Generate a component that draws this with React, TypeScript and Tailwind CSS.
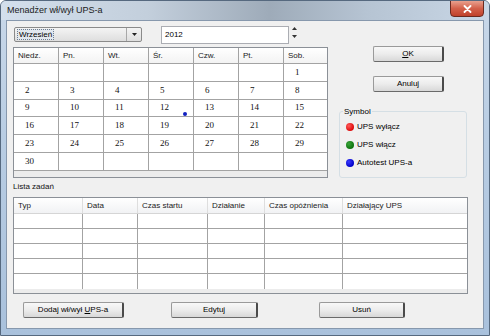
import React from 'react';

const sans = { fontFamily: '"Liberation Sans", Arial, sans-serif' };

const Btn = ({ children, className = '' }: { children: React.ReactNode; className?: string }) => (
  <div
    className={`flex items-center justify-center h-[16px] rounded-[2px] border border-[#9a9a9a] border-r-2 border-r-[#4a4a4a] border-b-[#6a6a6a] bg-gradient-to-b from-[#f8f8f8] via-[#ececec] to-[#d8d8d8] text-[8px] leading-none text-black ${className}`}
  >
    {children}
  </div>
);

const Dot = ({ color }: { color: string }) => (
  <span className={`inline-block w-[8px] h-[8px] rounded-full ${color}`} />
);

const weeks: (number | null)[][] = [
  [null, null, null, null, null, null, 1],
  [2, 3, 4, 5, 6, 7, 8],
  [9, 10, 11, 12, 13, 14, 15],
  [16, 17, 18, 19, 20, 21, 22],
  [23, 24, 25, 26, 27, 28, 29],
  [30, null, null, null, null, null, null],
];
const rowHeights = ['h-[18px]', 'h-[18px]', 'h-[17px]', 'h-[18px]', 'h-[18px]', 'h-[18px]'];
const days = ['Niedz.', 'Pn.', 'Wt.', 'Śr.', 'Czw.', 'Pt.', 'Sob.'];

const taskCols = ['Typ', 'Data', 'Czas startu', 'Działanie', 'Czas opóźnienia', 'Działający UPS'];
const taskGrid = 'grid grid-cols-[69px_55px_70px_57px_78px_1fr]';

export default function App() {
  return (
    <div
      style={sans}
      className="w-[490px] h-[336px] flex flex-col border border-[#56697f] rounded-t-[6px] bg-[linear-gradient(to_bottom,#c9d8e9,#b9cde3_40%,#a9c1dc)] overflow-hidden"
    >
      {/* pasek tytułu */}
      <div className="h-[19px] flex items-start justify-between bg-[linear-gradient(to_right,#d3dfec,#c3cfdc_30%,#9eabb9_55%,#b6c4d3_75%,#c9d7e6)]">
        <span className="pl-[6px] pt-[4px] text-[9px] leading-[10px] text-[#1b1b1b]">Menadżer wł/wył UPS-a</span>
        <div className="mr-[5px] w-[34px] h-[17px] -mt-px rounded-b-[4px] border border-[#6b2a20] bg-gradient-to-b from-[#e8a08e] via-[#d3604a] to-[#c0412b] flex items-center justify-center">
          <svg width="9" height="8" viewBox="0 0 9 8">
            <path d="M1.5 1 L7.5 7 M7.5 1 L1.5 7" stroke="#fff" strokeWidth="1.8" strokeLinecap="round" />
          </svg>
        </div>
      </div>

      {/* obszar klienta */}
      <div className="mx-[5px] mb-[6px] h-[309px] border border-[#8798ad] bg-[#f0f0f0] flex flex-col pl-[6px]">
        <div className="flex items-start">
          {/* lewa kolumna */}
          <div className="w-[315px] flex flex-col">
            <div className="h-[26px] flex items-start">
              <div className="mt-[6px] ml-[1px] w-[128px] h-[15px] flex rounded-[2px] border border-[#8a8a8a] bg-gradient-to-b from-[#f4f4f4] to-[#dedede]">
                <div className="flex-1 flex items-center pl-[2px]">
                  <span className="px-[1px] text-[8px] leading-[9px] border border-dotted border-[#6d7c8e] bg-[#e2e8ef]">Wrzesień</span>
                </div>
                <div className="w-[15px] border-l border-[#a8a8a8] flex items-center justify-center">
                  <svg width="5" height="3" viewBox="0 0 5 3">
                    <path d="M0 0 H5 L2.5 3 Z" fill="#222" />
                  </svg>
                </div>
              </div>
              <div className="mt-[5px] ml-[19px] w-[128px] h-[18px] border border-[#abadb3] bg-white flex items-center pl-[3px] text-[8px]">
                2012
              </div>
              <div className="mt-[6px] ml-[3px] flex flex-col items-center gap-[5px]">
                <svg width="5" height="3" viewBox="0 0 5 3">
                  <path d="M2.5 0 L5 3 H0 Z" fill="#333" />
                </svg>
                <svg width="5" height="3" viewBox="0 0 5 3">
                  <path d="M0 0 H5 L2.5 3 Z" fill="#333" />
                </svg>
              </div>
            </div>

            {/* kalendarz */}
            <div className="w-[315px] h-[131px] border border-[#8b9097] bg-[#ececec] flex flex-col">
              <div className="grid grid-cols-[45px_45px_45px_45px_45px_45px_1fr] h-[16px] border-b border-[#a3a3a3] bg-gradient-to-b from-white to-[#f3f3f3]">
                {days.map((d, i) => (
                  <div key={d} className={`flex items-center pl-[4px] text-[8px] text-[#222] ${i < 6 ? 'border-r border-[#a3a3a3]' : ''}`}>
                    {d}
                  </div>
                ))}
              </div>
              {weeks.map((w, r) => (
                <div key={r} className={`grid grid-cols-[45px_45px_45px_45px_45px_45px_1fr] ${rowHeights[r]} border-b border-[#a3a3a3] bg-white`}>
                  {w.map((n, i) => (
                    <div
                      key={i}
                      className={`relative flex items-center pl-[11px] text-[9px] text-[#111] ${i < 6 ? 'border-r border-[#a3a3a3]' : ''}`}
                      style={{ fontFamily: '"Liberation Serif", "Times New Roman", serif' }}
                    >
                      {n ?? ''}
                      {n === 12 && (
                        <span className="absolute left-[34px] top-[12px] w-[4px] h-[4px] rounded-full bg-[#1020c0]" />
                      )}
                    </div>
                  ))}
                </div>
              ))}
            </div>
          </div>

          {/* prawa kolumna */}
          <div className="ml-[11px] w-[128px] flex flex-col">
            <Btn className="mt-[25px] ml-[34px] w-[71px]">
              <span><u>O</u>K</span>
            </Btn>
            <Btn className="mt-[14px] ml-[34px] w-[71px]">Anuluj</Btn>
            <div className="relative mt-[19px] h-[67px] rounded-[3px] border border-[#d5dfe5] pt-[11px] pl-[6px] flex flex-col gap-[10px]">
              <span className="absolute -top-[5px] left-[3px] px-px bg-[#f0f0f0] text-[8px] leading-[9px]">Symbol</span>
              <div className="flex items-center gap-[3px] text-[8px] leading-[8px]">
                <Dot color="bg-[radial-gradient(circle_at_35%_35%,#ff5a5a,#dd0a0a_70%)]" />
                UPS wyłącz
              </div>
              <div className="flex items-center gap-[3px] text-[8px] leading-[8px]">
                <Dot color="bg-[radial-gradient(circle_at_35%_35%,#3aa43a,#0d730d_70%)]" />
                UPS włącz
              </div>
              <div className="flex items-center gap-[3px] text-[8px] leading-[8px]">
                <Dot color="bg-[radial-gradient(circle_at_35%_35%,#3b3bff,#0000c8_70%)]" />
                Autotest UPS-a
              </div>
            </div>
          </div>
        </div>

        <div className="h-[19px] pt-[4px] text-[8px] leading-[10px] text-[#111]">Lista zadań</div>

        {/* lista zadań */}
        <div className="w-[455px] h-[97px] border border-[#8b9097] bg-[#ececec] flex flex-col">
          <div className={`${taskGrid} h-[16px] border-b border-[#d5d5d5] bg-gradient-to-b from-white to-[#f1f2f4]`}>
            {taskCols.map((c, i) => (
              <div key={c} className={`flex items-center pl-[4px] text-[8px] text-[#222] ${i < 5 ? 'border-r border-[#dedede]' : ''}`}>
                {c}
              </div>
            ))}
          </div>
          {[0, 1, 2, 3, 4].map((r) => (
            <div key={r} className={`${taskGrid} h-[15px] bg-white ${r < 4 ? 'border-b border-[#a3a3a3]' : ''}`}>
              {taskCols.map((c, i) => (
                <div key={c} className={i < 5 ? 'border-r border-[#a3a3a3]' : ''} />
              ))}
            </div>
          ))}
        </div>

        <div className="mt-[8px] flex">
          <Btn className="ml-[10px] w-[101px]">
            <span>Dodaj wł/wył <u>U</u>PS-a</span>
          </Btn>
          <Btn className="ml-[47px] w-[87px]">Edytuj</Btn>
          <Btn className="ml-[61px] w-[86px]">Usuń</Btn>
        </div>
      </div>
    </div>
  );
}
